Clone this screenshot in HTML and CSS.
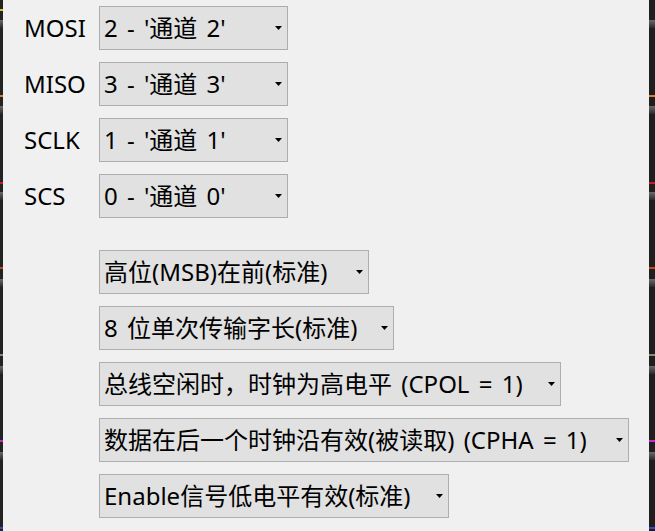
FILE: index.html
```html
<!DOCTYPE html>
<html lang="zh-CN">
<head>
<meta charset="utf-8">
<title>SPI 设置</title>
<link rel="stylesheet" href="styles.css">
</head>
<body>
<div class="strip strip-left">
  <i class="mark m-yellow t10"></i>
  <i class="shade t20"></i>
  <i class="mark m-orange t96"></i>
  <i class="shade t106"></i>
  <i class="mark m-red t183"></i>
  <i class="shade t192"></i>
  <i class="mark m-orred t268"></i>
  <i class="shade t279"></i>
  <i class="mark m-olive t355"></i>
  <i class="shade t366"></i>
  <i class="mark m-magenta t441"></i>
  <i class="shade t452"></i>
  <i class="mark m-blue t528"></i>
</div>
<main class="panel">
  <section class="channels">
    <div class="row">
      <span class="label">MOSI</span>
      <div class="combo w-ch"><span class="val">2 - '通道 2'</span><svg class="arrow" width="7" height="4" viewBox="0 0 7 4"><polygon points="0,0 7,0 3.5,4" fill="#000"/></svg></div>
    </div>
    <div class="row">
      <span class="label">MISO</span>
      <div class="combo w-ch"><span class="val">3 - '通道 3'</span><svg class="arrow" width="7" height="4" viewBox="0 0 7 4"><polygon points="0,0 7,0 3.5,4" fill="#000"/></svg></div>
    </div>
    <div class="row">
      <span class="label">SCLK</span>
      <div class="combo w-ch"><span class="val">1 - '通道 1'</span><svg class="arrow" width="7" height="4" viewBox="0 0 7 4"><polygon points="0,0 7,0 3.5,4" fill="#000"/></svg></div>
    </div>
    <div class="row">
      <span class="label">SCS</span>
      <div class="combo w-ch"><span class="val">0 - '通道 0'</span><svg class="arrow" width="7" height="4" viewBox="0 0 7 4"><polygon points="0,0 7,0 3.5,4" fill="#000"/></svg></div>
    </div>
  </section>
  <section class="options">
    <div class="combo w-1"><span class="val">高位(MSB)在前(标准)</span><svg class="arrow" width="7" height="4" viewBox="0 0 7 4"><polygon points="0,0 7,0 3.5,4" fill="#000"/></svg></div>
    <div class="combo w-2"><span class="val">8 位单次传输字长(标准)</span><svg class="arrow" width="7" height="4" viewBox="0 0 7 4"><polygon points="0,0 7,0 3.5,4" fill="#000"/></svg></div>
    <div class="combo w-3"><span class="val">总线空闲时，时钟为高电平 (CPOL = 1)</span><svg class="arrow" width="7" height="4" viewBox="0 0 7 4"><polygon points="0,0 7,0 3.5,4" fill="#000"/></svg></div>
    <div class="combo w-4"><span class="val">数据在后一个时钟沿有效(被读取) (CPHA = 1)</span><svg class="arrow" width="7" height="4" viewBox="0 0 7 4"><polygon points="0,0 7,0 3.5,4" fill="#000"/></svg></div>
    <div class="combo w-5"><span class="val">Enable信号低电平有效(标准)</span><svg class="arrow" width="7" height="4" viewBox="0 0 7 4"><polygon points="0,0 7,0 3.5,4" fill="#000"/></svg></div>
  </section>
</main>
<div class="strip strip-right">
  <i class="shade t20"></i>
  <i class="mark m-orange t96"></i>
  <i class="shade t106"></i>
  <i class="mark m-red t183"></i>
  <i class="shade t192"></i>
  <i class="mark m-orred t268"></i>
  <i class="shade t279"></i>
  <i class="mark m-olive t355"></i>
  <i class="shade t366"></i>
  <i class="mark m-magenta t441"></i>
  <i class="shade t452"></i>
  <i class="mark m-blue t528"></i>
</div>
</body>
</html>
```

FILE: styles.css
```css
html, body {
  margin: 0;
  padding: 0;
}
body {
  display: flex;
  width: 655px;
  height: 531px;
  overflow: hidden;
  background: #f0f0f0;
  font-family: "Noto Sans", "Noto Sans CJK SC", sans-serif;
  font-size: 24px;
  color: #000;
}
.strip {
  position: relative;
  flex: none;
  height: 100%;
}
.strip-left {
  width: 3px;
  background: #232323;
}
.strip-right {
  width: 6px;
  background: #1e1e1e;
}
.mark {
  position: absolute;
  left: 0;
  right: 0;
  height: 2px;
}
.shade {
  position: absolute;
  left: 0;
  right: 0;
  height: 8px;
  background: linear-gradient(#6a6a6a, #2a2a2a);
}
.m-yellow { background: #d8c020; }
.m-orange { background: #d88030; }
.m-red { background: #c82020; }
.m-orred { background: #c04818; }
.m-olive { background: #8a8a78; }
.m-magenta { background: #c828c8; }
.m-blue { background: #3048d0; }
.t10 { top: 9px; }
.t20 { top: 20px; }
.t96 { top: 95px; }
.t106 { top: 106px; }
.t183 { top: 182px; }
.t192 { top: 192px; }
.t268 { top: 267px; }
.t279 { top: 279px; }
.t355 { top: 354px; }
.t366 { top: 366px; }
.t441 { top: 440px; }
.t452 { top: 452px; }
.t528 { top: 527px; }

.panel {
  flex: 1;
  padding: 6px 0 0 21px;
  display: flex;
  flex-direction: column;
  gap: 32px;
}
.channels {
  display: flex;
  flex-direction: column;
  gap: 12px;
}
.row {
  display: flex;
  align-items: center;
}
.label {
  width: 75px;
  line-height: 1;
  white-space: nowrap;
}
.options {
  display: flex;
  flex-direction: column;
  gap: 12px;
  padding-left: 75px;
}
.combo {
  box-sizing: border-box;
  height: 44px;
  border: 1px solid #adadad;
  background: #e1e1e1;
  display: flex;
  align-items: center;
  justify-content: space-between;
  padding: 0 5px 0 4px;
  white-space: nowrap;
  flex: none;
}
.val {
  line-height: 1;
  word-spacing: 3px;
}
.arrow {
  flex: none;
  display: block;
}
.w-ch { width: 189px; }
.w-1 { width: 270px; }
.w-2 { width: 295px; }
.w-3 { width: 462px; }
.w-4 { width: 530px; }
.w-5 { width: 350px; }
```
